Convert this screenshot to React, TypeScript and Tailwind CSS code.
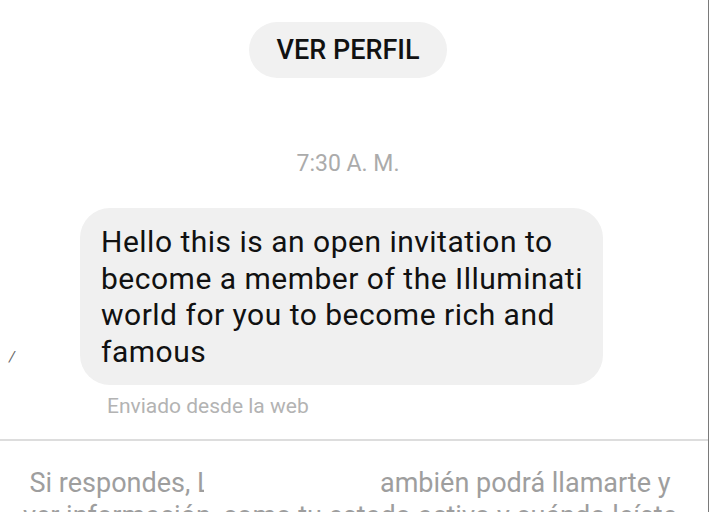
export default function App() {
  return (
    <div
      className="relative w-[709px] h-[512px] overflow-hidden bg-white border-r border-[#7a7a7a]"
      style={{ fontFamily: 'Roboto, "Liberation Sans", sans-serif' }}
    >
      <div className="w-[696px] flex justify-center pt-[22px]">
        <div className="h-[56px] w-[198px] rounded-full bg-[#f1f1f1] flex items-center justify-center text-[27px] font-medium text-[#111]">
          VER PERFIL
        </div>
      </div>

      <div className="w-[696px] mt-[73px] text-center text-[23px] leading-[26px] text-[#ababab]">7:30 A. M.</div>

      <div className="relative mt-[31px] pl-[80px]">
        <span className="absolute left-[9px] top-[138px] text-[15px] italic text-[#666]">/</span>
        <div className="w-[523px] rounded-[30px] bg-[#f0f0f0] pl-[21px] pr-[10px] pt-[16px] pb-[15px] text-[30px] leading-[36.5px] tracking-[0.5px] text-[#111]">
          Hello this is an open invitation to become a member of the Illuminati world for you to become rich and famous
        </div>
        <div className="pl-[27px] pt-[9px] text-[21px] leading-[24px] text-[#b3b3b3]">Enviado desde la web</div>
      </div>

      <div className="mt-[21px] h-[2px] bg-[#dddddd]" />

      <div className="w-[700px] pt-[26px] text-center text-[27px] leading-[33px] text-[#9e9e9e] whitespace-nowrap">
        <div>
          Si respondes,{' '}
          <span className="inline-block w-[7px] overflow-hidden align-bottom">L</span>
          <span className="inline-block w-[176px]" />
          ambién podrá llamarte y
        </div>
        <div>ver información, como tu estado activo y cuándo leíste</div>
        <div>los mensajes.</div>
      </div>
    </div>
  );
}
